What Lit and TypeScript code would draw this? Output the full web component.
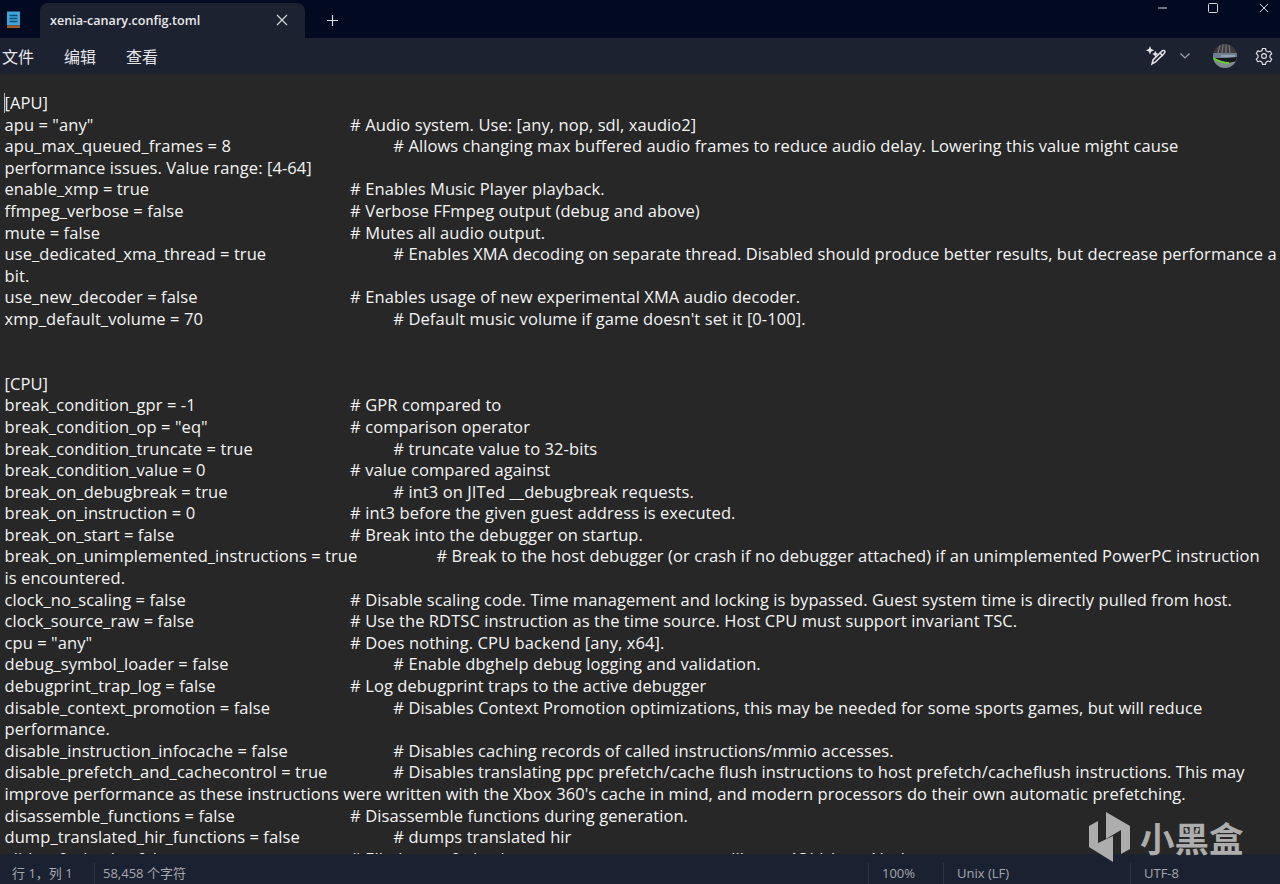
import { LitElement, html, css, svg } from "lit";
import { customElement } from "lit/decorators.js";

const T = "\t";
const lines: string[] = [
  "[APU]",
  `apu = "any"${T.repeat(6)}# Audio system. Use: [any, nop, sdl, xaudio2]`,
  `apu_max_queued_frames = 8${T.repeat(4)}# Allows changing max buffered audio frames to reduce audio delay. Lowering this value might cause performance issues. Value range: [4-64]`,
  `enable_xmp = true${T.repeat(5)}# Enables Music Player playback.`,
  `ffmpeg_verbose = false${T.repeat(4)}# Verbose FFmpeg output (debug and above)`,
  `mute = false${T.repeat(6)}# Mutes all audio output.`,
  `use_dedicated_xma_thread = true${T.repeat(3)}# Enables XMA decoding on separate thread. Disabled should produce better results, but decrease performance a bit.`,
  `use_new_decoder = false${T.repeat(4)}# Enables usage of new experimental XMA audio decoder.`,
  `xmp_default_volume = 70${T.repeat(5)}# Default music volume if game doesn't set it [0-100].`,
  "",
  "",
  "[CPU]",
  `break_condition_gpr = -1${T.repeat(4)}# GPR compared to`,
  `break_condition_op = "eq"${T.repeat(4)}# comparison operator`,
  `break_condition_truncate = true${T.repeat(4)}# truncate value to 32-bits`,
  `break_condition_value = 0${T.repeat(4)}# value compared against`,
  `break_on_debugbreak = true${T.repeat(4)}# int3 on JITed __debugbreak requests.`,
  `break_on_instruction = 0${T.repeat(4)}# int3 before the given guest address is executed.`,
  `break_on_start = false${T.repeat(5)}# Break into the debugger on startup.`,
  `break_on_unimplemented_instructions = true${T.repeat(2)}# Break to the host debugger (or crash if no debugger attached) if an unimplemented PowerPC instruction\nis encountered.`,
  `clock_no_scaling = false${T.repeat(4)}# Disable scaling code. Time management and locking is bypassed. Guest system time is directly pulled from host.`,
  `clock_source_raw = false${T.repeat(4)}# Use the RDTSC instruction as the time source. Host CPU must support invariant TSC.`,
  `cpu = "any"${T.repeat(6)}# Does nothing. CPU backend [any, x64].`,
  `debug_symbol_loader = false${T.repeat(4)}# Enable dbghelp debug logging and validation.`,
  `debugprint_trap_log = false${T.repeat(4)}# Log debugprint traps to the active debugger`,
  `disable_context_promotion = false${T.repeat(3)}# Disables Context Promotion optimizations, this may be needed for some sports games, but will reduce performance.`,
  `disable_instruction_infocache = false${T.repeat(3)}# Disables caching records of called instructions/mmio accesses.`,
  `disable_prefetch_and_cachecontrol = true${T.repeat(2)}# Disables translating ppc prefetch/cache flush instructions to host prefetch/cacheflush instructions. This may improve performance as these instructions were written with the Xbox 360's cache in mind, and modern processors do their own automatic prefetching.`,
  `disassemble_functions = false${T.repeat(3)}# Disassemble functions during generation.`,
  `dump_translated_hir_functions = false${T.repeat(3)}# dumps translated hir`,
  `elide_e0_check = false${T.repeat(5)}# Eliminate e0 check on some memory accesses, like to r13(tls) or r1(sp)`,
];

const closeIcon = svg`<path d="M1 1 L11 11 M11 1 L1 11" stroke="currentColor" stroke-width="1.2" fill="none"/>`;

@customElement("app-root")
export class AppRoot extends LitElement {
  static styles = css`
    :host {
      display: flex;
      flex-direction: column;
      position: relative;
      width: 1280px;
      height: 884px;
      overflow: hidden;
      font-family: "Open Sans", "Noto Sans CJK SC", sans-serif;
      background: #272727;
      color: #f2f2f2;
    }
    .titlebar {
      flex: none;
      height: 38px;
      display: flex;
      align-items: flex-end;
      background: #010a20;
      position: relative;
    }
    .app-icon { margin: 0 19px 9px 6px; flex: none; display: block; }
    .tab {
      width: 265px;
      height: 35px;
      box-sizing: border-box;
      background: #1c2230;
      border-radius: 8px 8px 0 0;
      display: flex;
      align-items: center;
      justify-content: space-between;
      padding: 0 17px 1px 10px;
      font-size: 12.6px;
      font-weight: 600;
      color: #e8e8ea;
    }
    .tab svg { color: #d6d7da; display: block; }
    .plus { margin: 0 0 11px 21px; color: #d6d7da; display: block; }
    .win {
      margin-left: auto;
      align-self: flex-start;
      display: flex;
      gap: 21px;
      padding-right: 1px;
      color: #d8d9dc;
    }
    .win div { width: 30px; height: 15px; display: flex; align-items: center; justify-content: center; }
    .menubar {
      flex: none;
      height: 36px;
      background: #1c2230;
      display: flex;
      align-items: center;
      padding: 0 7px 0 2px;
      font-size: 16px;
      gap: 30px;
      color: #e6e6e8;
    }
    .tools { margin-left: auto; display: flex; align-items: center; color: #e4e5e8; }
    .tools svg { display: block; }
    .chev { margin: 0 23px 0 13px; }
    .avatar { margin-right: 18px; }
    .editor {
      flex: 1;
      min-height: 0;
      overflow: hidden;
      box-sizing: border-box;
      padding: 18px 0 0 4.5px;
      background: #272727;
      position: relative;
      font-size: 16.5px;
      line-height: 21.6px;
      color: #f4f4f4;
    }
    .line {
      min-height: 21.6px;
      white-space: pre-wrap;
      tab-size: 43.2px;
      letter-spacing: 0.08px;
    }
    .caret {
      position: absolute;
      left: 4px;
      top: 19px;
      width: 1px;
      height: 20px;
      background: #b8b8b8;
    }
    .status {
      flex: none;
      height: 30px;
      background: #1a2131;
      display: flex;
      align-items: flex-end;
      font-size: 13px;
      color: #a6a8ad;
    }
    .cell { height: 21px; padding-bottom: 2px; display: flex; align-items: center; box-sizing: border-box; border-left: 1px solid #2c3342; padding-left: 13px; }
    .c1 { width: 94px; border-left: 0; padding-left: 12px; }
    .c2 { width: 774px; padding-left: 8px; }
    .c3 { width: 75px; }
    .c4 { width: 187px; }
    .c5 { flex: 1; }
    .watermark {
      position: absolute;
      left: 1089px;
      top: 812px;
      display: flex;
      align-items: center;
      gap: 10px;
      color: #adadad;
      font-size: 34.5px;
      font-weight: 700;
      line-height: 50px;
      font-family: "Noto Sans CJK SC", sans-serif;
      pointer-events: none;
    }
    .watermark svg { display: block; }
  `;

  render() {
    return html`
      <div class="titlebar">
        <svg class="app-icon" width="15" height="18" viewBox="0 0 15 18">
          <rect x="1" y="0.5" width="13" height="14" fill="#3ea6d8"/>
          <rect x="1" y="14.5" width="13" height="2.5" fill="#a2581f"/>
          <path d="M3.500 4.500h8M3.500 7.500h8M3.500 10.500h8" stroke="#0d4e78" stroke-width="1.3"/>
        </svg>
        <div class="tab">
          <span>xenia-canary.config.toml</span>
          <svg width="12" height="12" viewBox="0 0 12 12">${closeIcon}</svg>
        </div>
        <svg class="plus" width="13" height="13" viewBox="0 0 13 13"><path d="M6.500 1v11M1 6.500h11" stroke="currentColor" stroke-width="1.2"/></svg>
        <div class="win">
          <div><svg width="9" height="2" viewBox="0 0 9 2"><path d="M0 1h9" stroke="currentColor"/></svg></div>
          <div><svg width="10" height="10" viewBox="0 0 10 10"><rect x="0.5" y="0.5" width="9" height="9" rx="1" fill="none" stroke="currentColor"/></svg></div>
          <div><svg width="10" height="10" viewBox="0 0 12 12">${closeIcon}</svg></div>
        </div>
      </div>
      <div class="menubar">
        <span>文件</span><span>编辑</span><span>查看</span>
        <div class="tools">
          <svg width="22" height="22" viewBox="0 0 22 22" fill="none" stroke="currentColor" stroke-width="1.5">
            <path d="M5 1l1.200 3 3 1.200-3 1.200L5 9.400 3.800 6.400.8 5.200l3-1.200z" fill="currentColor" stroke="none"/>
            <path d="M10.300 5.800l1 2.200 2.200 1-2.200 1-1 2.200-1-2.200-2.200-1 2.200-1z" fill="currentColor" stroke="none"/>
            <path d="M7 19l1-4 9-9c1-1 3-.5 3 .8 0 .6-.3 1-.7 1.400L10.500 17z"/>
            <path d="M15 8l3 3"/>
          </svg>
          <svg class="chev" width="10" height="6" viewBox="0 0 10 6" fill="none" stroke="#a8aab0" stroke-width="1.1"><path d="M.5.5L5 5 9.500.5"/></svg>
          <svg class="avatar" width="24" height="24" viewBox="0 0 24 24">
            <defs>
              <clipPath id="avc"><circle cx="12" cy="12" r="12"/></clipPath>
            </defs>
            <g clip-path="url(#avc)">
              <rect width="24" height="24" fill="#3c3a3a"/>
              <path d="M5 9 L7 1 M9 9 L10 0 M13 9 V0 M17 9 L16 1" stroke="#77767a" stroke-width="1.2"/>
              <rect y="9" width="24" height="5" fill="#6e7f92"/>
              <path d="M8 12h14" stroke="#b9c3cc" stroke-width="1.2"/>
              <rect y="14" width="24" height="10" fill="#7f8b8d"/>
              <path d="M0 14 L15 19 L24 17 V13 L14 14z" fill="#15181a"/>
              <path d="M0 14 Q8 19 16 19" stroke="#63d42d" stroke-width="1.800" fill="none"/>
            </g>
          </svg>
          <svg width="18" height="18" viewBox="0 0 24 24" fill="none" stroke="currentColor" stroke-width="1.5">
            <circle cx="12" cy="12" r="3.200"/>
            <path d="M10 2h4l.7 3 2.600 1.500 3-.9 2 3.400-2.300 2.100v3l2.300 2.100-2 3.400-3-.9-2.600 1.500-.7 3h-4l-.7-3-2.600-1.500-3 .9-2-3.400 2.300-2.100v-3L1.700 8.600l2-3.400 3 .9L9.300 5z" stroke-linejoin="round"/>
          </svg>
        </div>
      </div>
      <div class="editor">
        <div class="caret"></div>
        ${lines.map((l) => html`<div class="line">${l}</div>`)}
      </div>
      <div class="status">
        <div class="cell c1">行 1，列 1</div>
        <div class="cell c2">58,458 个字符</div>
        <div class="cell c3">100%</div>
        <div class="cell c4">Unix (LF)</div>
        <div class="cell c5">UTF-8</div>
      </div>
      <div class="watermark">
        <svg width="41" height="50" viewBox="0 0 41 50" fill="currentColor">
          <path d="M17 0 L41 14 V37 L32 42 V18 L17 27 Z"/>
          <path d="M0 14 L9 9 V31 L24 24 V50 L0 35 Z"/>
        </svg>
        <span>小黑盒</span>
      </div>
    `;
  }
}
